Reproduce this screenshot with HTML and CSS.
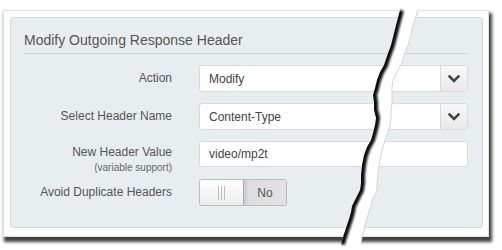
FILE: index.html
```html
<!DOCTYPE html>
<html>
<head>
<meta charset="utf-8">
<link rel="stylesheet" href="styles.css">
</head>
<body>
<div class="paper">
  <div class="panel">
    <div class="title">Modify Outgoing Response Header</div>
    <div class="form">
      <div class="label">Action</div>
      <div class="select">
        <span class="value">Modify</span>
        <span class="btn"><svg width="12" height="8" viewBox="0 0 12 8"><path d="M1.5 1.5 L6 6 L10.5 1.5" fill="none" stroke="#444" stroke-width="2.6" stroke-linecap="square"/></svg></span>
      </div>
      <div class="label">Select Header Name</div>
      <div class="select">
        <span class="value">Content-Type</span>
        <span class="btn"><svg width="12" height="8" viewBox="0 0 12 8"><path d="M1.5 1.5 L6 6 L10.5 1.5" fill="none" stroke="#444" stroke-width="2.6" stroke-linecap="square"/></svg></span>
      </div>
      <div class="label label-top">New Header Value<small>(variable support)</small></div>
      <div class="input"><span class="value">video/mp2t</span></div>
      <div class="label">Avoid Duplicate Headers</div>
      <div class="toggle">
        <span class="grip"><i></i><i></i><i></i></span>
        <span class="no">No</span>
      </div>
    </div>
  </div>
</div>
<svg class="tear" width="502" height="250" viewBox="0 0 502 250">
  <defs>
    <clipPath id="gap">
      <polygon points="400,0 400,10 396,25 394,33 391,45 387,56 384,65 380,72 377,80 375,88 373,95 374,103 374,110 376,118 375,125 373,133 371,140 367,147 364,155 362,165 361,175 361,183 360,190 357,196 355,200 352,206 351,212 349,219 347,225 345,231 343,237 341,244 340,250 359,250 361,243 362,237 364,231 365,225 367,218 369,212 371,206 372,200 375,195 377,190 377,183 378,175 379,165 381,155 383,147 385,140 388,132 390,125 391,118 391,110 392,103 392,95 392,88 393,80 397,72 401,65 404,56 408,45 411,34 413,25 416,17 418,10 420,0"/>
    </clipPath>
    <filter id="blur" x="-20%" y="-5%" width="140%" height="110%"><feGaussianBlur stdDeviation="1"/></filter>
  </defs>
  <polygon points="400,0 400,10 396,25 394,33 391,45 387,56 384,65 380,72 377,80 375,88 373,95 374,103 374,110 376,118 375,125 373,133 371,140 367,147 364,155 362,165 361,175 361,183 360,190 357,196 355,200 352,206 351,212 349,219 347,225 345,231 343,237 341,244 340,250 359,250 361,243 362,237 364,231 365,225 367,218 369,212 371,206 372,200 375,195 377,190 377,183 378,175 379,165 381,155 383,147 385,140 388,132 390,125 391,118 391,110 392,103 392,95 392,88 393,80 397,72 401,65 404,56 408,45 411,34 413,25 416,17 418,10 420,0" fill="#fff"/>
  <g clip-path="url(#gap)">
    <polyline points="400,10 396,25 394,33 391,45 387,56 384,65 380,72 377,80 375,88 373,95 374,103 374,110 376,118 375,125 373,133 371,140 367,147 364,155 362,165 361,175 361,183 360,190 357,196 355,200 352,206 351,212 349,219 347,225 345,231 343,237 341,244" fill="none" stroke="#111" stroke-width="8" filter="url(#blur)"/>
  </g>
  <polyline points="361,243 362,237 364,231 365,225 367,218 369,212 371,206 372,200 375,195 377,190 377,183 378,175 379,165 381,155 383,147 385,140 388,132 390,125 391,118 391,110 392,103 392,95 392,88 393,80 397,72 401,65 404,56 408,45 411,34 413,25 416,17 418,10" fill="none" stroke="#d4d4d4" stroke-width="1"/>
</svg>
</body>
</html>
```
FILE: styles.css
```css
html, body {
  margin: 0;
  padding: 0;
  background: #fff;
}
body {
  font-family: "Liberation Sans", Arial, sans-serif;
  width: 502px;
  height: 250px;
  position: relative;
  overflow: hidden;
}
.paper {
  margin: 10px 0 0 3px;
  width: 486px;
  height: 227px;
  box-sizing: border-box;
  border: 1px solid #e2e2e2;
  background: #fff;
  padding: 6px 5px 8px 6px;
  box-shadow: 2px 4px 3px 1px rgba(0, 0, 0, 0.75);
}
.panel {
  box-sizing: border-box;
  height: 211px;
  border: 1px solid #d3d8db;
  border-radius: 3px;
  background: #e8edf0;
  padding: 13px 13px 0 13px;
}
.title {
  font-size: 14px;
  line-height: 18px;
  color: #555;
  padding-bottom: 4px;
  border-bottom: 1px solid #cfd5d8;
}
.form {
  margin-top: 11px;
  display: grid;
  grid-template-columns: 148px 269px;
  column-gap: 27px;
  row-gap: 11px;
  grid-auto-rows: 27px;
}
.label {
  font-size: 12px;
  color: #555;
  text-align: right;
  line-height: 27px;
  white-space: nowrap;
}
.label-top {
  line-height: 16px;
  padding-top: 3px;
}
.label-top small {
  display: block;
  font-size: 10px;
  line-height: 16px;
  color: #666;
}
.select, .input {
  box-sizing: border-box;
  height: 27px;
  border: 1px solid #d7dbde;
  border-radius: 3px;
  background: #fff;
  display: flex;
  align-items: center;
  font-size: 12px;
  color: #444;
}
.input {
  height: 26px;
}
.value {
  flex: 1;
  padding-left: 9px;
}
.btn {
  width: 27px;
  height: 100%;
  box-sizing: border-box;
  border-left: 1px solid #d7dbde;
  background: linear-gradient(#f8f8f8, #e9e9e9);
  display: flex;
  align-items: center;
  justify-content: center;
  border-radius: 0 2px 2px 0;
}
.toggle {
  width: 88px;
  height: 27px;
  box-sizing: border-box;
  border: 1px solid #b9bcbe;
  border-radius: 3px;
  display: flex;
  overflow: hidden;
}
.grip {
  width: 43px;
  background: linear-gradient(#ffffff, #ececec);
  border-right: 1px solid #aeb1b3;
  display: flex;
  justify-content: center;
  align-items: center;
  gap: 2px;
}
.grip i {
  width: 1px;
  height: 14px;
  background: #bcbcbc;
}
.no {
  flex: 1;
  background: linear-gradient(90deg, #c9c9c9 0, #dedede 5px, #e2e2e2);
  font-size: 12px;
  color: #555;
  display: flex;
  align-items: center;
  justify-content: center;
}
.tear {
  position: absolute;
  left: 0;
  top: 0;
  pointer-events: none;
}
```
